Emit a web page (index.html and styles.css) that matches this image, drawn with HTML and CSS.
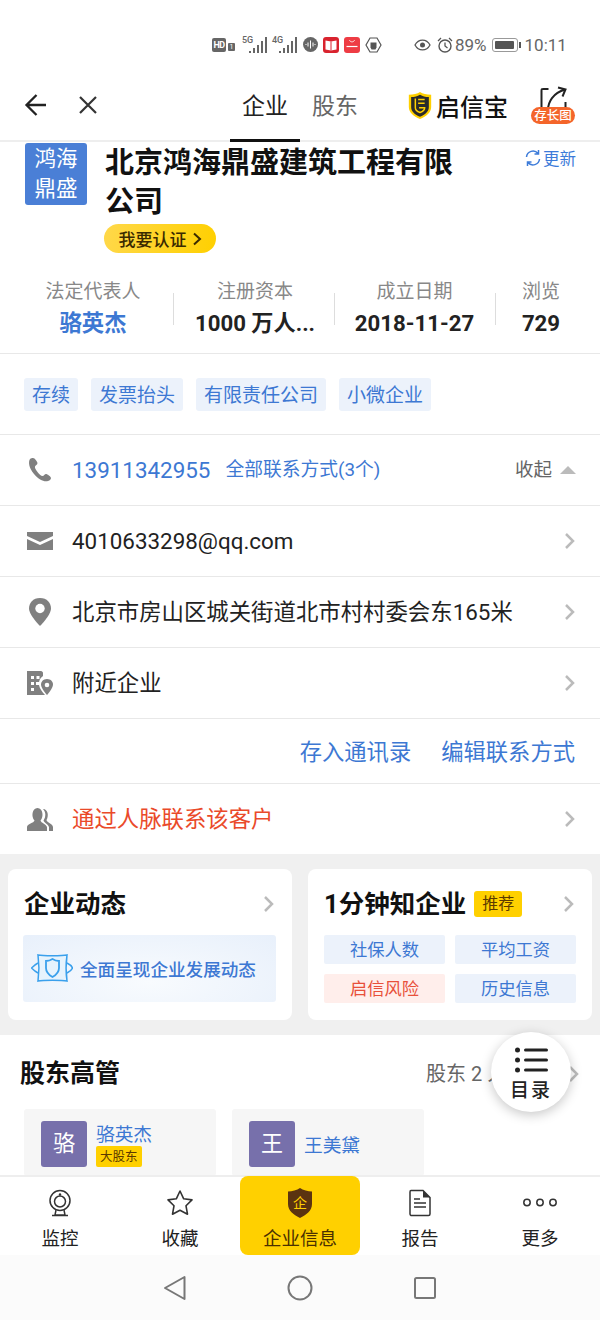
FILE: index.html
```html
<!DOCTYPE html>
<html lang="zh">
<head>
<meta charset="utf-8">
<title>北京鸿海鼎盛建筑工程有限公司</title>
<link rel="stylesheet" href="styles.css">
</head>
<body>
<div class="page">
  <div class="status">
    <span class="hd">HD</span><span class="sim">1</span>
    <span class="net"><i>5G</i><svg width="18" height="16" viewBox="0 0 18 16"><path d="M1 14v2M5 11v5M9 8v8M13 4v12M17 0v16" stroke="#666" stroke-width="2"/></svg></span>
    <span class="net"><i>4G</i><svg width="18" height="16" viewBox="0 0 18 16"><path d="M1 14v2M5 11v5M9 8v8M13 4v12M17 0v16" stroke="#666" stroke-width="2"/></svg></span>
    <svg class="s-ic sound" width="15" height="15" viewBox="0 0 15 15"><circle cx="7.500" cy="7.500" r="7.500" fill="#666"/><path d="M2.500 7.500h1M5 5.500v4M7.500 3.500v8M10 5.500v4M12 7v1" stroke="#fff" stroke-width="1"/></svg>
    <svg class="s-ic" width="16" height="16" viewBox="0 0 16 16"><rect width="16" height="16" rx="3" fill="#d9232e"/><path d="M2.500 3.500l5.500 1 5.500-1v9l-5.500 1-5.500-1z" fill="#fff"/><path d="M8 4.500v9" stroke="#d9232e"/></svg>
    <svg class="s-ic" width="16" height="16" viewBox="0 0 16 16"><rect width="16" height="16" rx="3" fill="#ee3c44"/><path d="M5.500 3c.5 2.500 4.500 2.500 5 0" stroke="#fff" fill="none" stroke-width=".8"/><path d="M2.500 9.500h11" stroke="#fff" stroke-width="1.200"/></svg>
    <svg class="s-ic" width="17" height="16" viewBox="0 0 17 16"><path d="M5 1h7l4 7-4 7H5L1 8z" fill="none" stroke="#555" stroke-width="1.200"/><path d="M5.500 5.500h6v5l-1 2h-4l-1-2z" fill="#555"/></svg>
    <span class="s-gap"></span>
    <svg class="s-ic eye" width="17" height="12" viewBox="0 0 17 12"><path d="M1 6c3.500-6.500 11.500-6.500 15 0-3.500 6.500-11.500 6.500-15 0z" fill="none" stroke="#555" stroke-width="1.300"/><circle cx="8.500" cy="6" r="2.500" fill="#555"/></svg>
    <svg class="s-ic alarm" width="16" height="16" viewBox="0 0 16 16"><circle cx="8" cy="9" r="6" fill="none" stroke="#555" stroke-width="1.400"/><path d="M8 5.500V9l2.500 2M1 4l3-3M15 4l-3-3" fill="none" stroke="#555" stroke-width="1.300"/></svg>
    <span class="pct">89%</span>
    <span class="batt"><b></b></span>
    <span class="time">10:11</span>
  </div>

  <div class="nav">
    <svg class="nav-ic" width="24" height="24" viewBox="0 0 24 24"><path d="M22 12H3M12.500 2l-10 10 10 10" fill="none" stroke="#222" stroke-width="2.300"/></svg>
    <svg class="nav-ic close" width="20" height="20" viewBox="0 0 20 20"><path d="M2 2l16 16M18 2L2 18" fill="none" stroke="#333" stroke-width="2.200"/></svg>
    <div class="tabs">
      <span class="tab active">企业</span>
      <span class="tab">股东</span>
    </div>
    <div class="brand">
      <svg width="24" height="27" viewBox="0 0 24 29"><path d="M12 0c3 2 7 3 12 3v13c0 6-5 10-12 13C5 26 0 22 0 16V3c5 0 9-1 12-3z" fill="#ffd000"/><path d="M12 3c3 1.500 5.500 2.500 9.500 2.500V16c0 5-4 8-9.500 10.500C6.500 24 2.500 21 2.500 16V5.500C6.500 5.500 9 4.500 12 3z" fill="#2a2a2a"/><path d="M7 7v10c0 2 2 4 5 5 3-1 5-3 5-5h-6M10 8h7M10 12h7" fill="none" stroke="#ffd000" stroke-width="1.600"/></svg>
      <span>启信宝</span>
    </div>
    <div class="longshot">
      <svg width="30" height="26" viewBox="0 0 30 26"><path d="M3.500 22V5c0-2 0-2 2-2h5M27.500 16v6M10 24c0-8 5-17 17-20.500M20 1.500l7.500 2-3 7" fill="none" stroke="#222" stroke-width="2"/></svg>
      <span class="ls-badge">存长图</span>
    </div>
  </div>

  <div class="head">
    <div class="logo">鸿海<br>鼎盛</div>
    <div class="head-main">
      <h1>北京鸿海鼎盛建筑工程有限公司</h1>
      <span class="cert">我要认证<svg width="10" height="14" viewBox="0 0 10 14"><path d="M2 1.500l6 5.500-6 5.500" fill="none" stroke="#3a2a00" stroke-width="2"/></svg></span>
    </div>
    <div class="update">
      <svg width="18" height="18" viewBox="0 0 18 18"><path d="M2.500 8a6.500 6.500 0 0 1 11.500-3.500M15.500 10A6.500 6.500 0 0 1 4 13.500M14.500 1v4h-4M3.500 17v-4h4" fill="none" stroke="#3d7bd9" stroke-width="1.500"/></svg>更新
    </div>
  </div>

  <div class="stats">
    <div class="stat s1"><span class="k">法定代表人</span><span class="v link">骆英杰</span></div>
    <div class="stat s2"><span class="k">注册资本</span><span class="v">1000 万人...</span></div>
    <div class="stat s3"><span class="k">成立日期</span><span class="v">2018-11-27</span></div>
    <div class="stat s4"><span class="k">浏览</span><span class="v">729</span></div>
  </div>

  <div class="tags">
    <span class="tag">存续</span><span class="tag">发票抬头</span><span class="tag">有限责任公司</span><span class="tag">小微企业</span>
  </div>

  <div class="row">
    <svg class="r-ic" width="28" height="28" viewBox="0 0 28 28"><path d="M4 3c-2 3-1 9 4 15s10 8 14 7c2-.5 3-2 3-3 0-1.500-4-4-5-4-1.500 0-2 2-3.500 2-1.500 0-3.500-2-5-4s-3-4-2.500-5.500c.3-1.300 2.500-1.500 2.500-3.500C11 5.500 9 2 7 2 6 2 5 2 4 3z" fill="#808080"/></svg>
    <span class="phone">13911342955</span>
    <span class="allc">全部联系方式(3个)</span>
    <span class="fold">收起<i></i></span>
  </div>
  <div class="row">
    <svg class="r-ic" width="28" height="20" viewBox="0 0 28 20"><path d="M1 1h26v4L14 11 1 5zM1 8l13 6 13-6v11H1z" fill="#808080"/></svg>
    <span class="rt">4010633298@qq.com</span>
    <svg class="chev" width="12" height="18" viewBox="0 0 12 18"><path d="M2 2l7 7-7 7" fill="none" stroke="#bbb" stroke-width="2.500"/></svg>
  </div>
  <div class="row">
    <svg class="r-ic" width="28" height="30" viewBox="0 0 28 30"><path d="M14 1C7 1 3 6 3 11.500 3 18 14 29 14 29s11-11 11-17.500C25 6 21 1 14 1z" fill="#808080"/><circle cx="14" cy="11.500" r="4.700" fill="#fff"/></svg>
    <span class="rt">北京市房山区城关街道北市村村委会东165米</span>
    <svg class="chev" width="12" height="18" viewBox="0 0 12 18"><path d="M2 2l7 7-7 7" fill="none" stroke="#bbb" stroke-width="2.500"/></svg>
  </div>
  <div class="row">
    <svg class="r-ic" width="28" height="26" viewBox="0 0 28 26"><path d="M1 1h14c1 0 2 1 2 2v3c-3 2-4.500 5-4 9 .5 3 3 7 6 10H1z" fill="#808080"/><path d="M5 6h3v3H5zM10.500 6h3v3h-3zM5 12h3v3H5zM10 12h3v3h-3zM5 18h3v3H5z" fill="#fff"/><path d="M21 9c-4 0-6 3-6 5.500 0 4 6 10.500 6 10.500s6-6.500 6-10.500C27 12 25 9 21 9z" fill="#808080"/><circle cx="21" cy="15" r="2.300" fill="#fff"/></svg>
    <span class="rt">附近企业</span>
    <svg class="chev" width="12" height="18" viewBox="0 0 12 18"><path d="M2 2l7 7-7 7" fill="none" stroke="#bbb" stroke-width="2.500"/></svg>
  </div>
  <div class="actions"><span>存入通讯录</span><span>编辑联系方式</span></div>
  <div class="row last">
    <svg class="r-ic" width="28" height="26" viewBox="0 0 28 26"><path d="M1 25v-4c0-3 7-4 7.500-6.500C5 11 6 2 11.500 2S18 11 14.500 14.500C15 17 20 18 21 21v4z" fill="#808080"/><path d="M17 3c5 0 6 7 3.500 11 .5 2.500 6 3.500 6.500 7v4h-4v-4c-1-3-5-4.500-5.500-6.500C20 11 20 6 17 3z" fill="#808080"/></svg>
    <span class="rt red">通过人脉联系该客户</span>
    <svg class="chev" width="12" height="18" viewBox="0 0 12 18"><path d="M2 2l7 7-7 7" fill="none" stroke="#bbb" stroke-width="2.500"/></svg>
  </div>

  <div class="cards">
    <div class="card">
      <div class="c-head"><b>企业动态</b>
        <svg class="chev" width="12" height="18" viewBox="0 0 12 18"><path d="M2 2l7 7-7 7" fill="none" stroke="#bbb" stroke-width="2.500"/></svg></div>
      <div class="banner">
        <svg width="42" height="28" viewBox="0 0 42 28"><path d="M7 1c5 1 24 1 29 0-1 7-1 19 0 26-5-1-24-1-29 0 1-7 1-19 0-26z" fill="#e6f3fd" stroke="#3aa0ec" stroke-width="1.500"/><path d="M7 9c-3 1.500-5 3.500-6.500 5C2 15.500 4 17.500 7 19M36 9c3 1.500 5 3.500 5.500 5-.5 1.500-2.500 3.500-5.500 5" fill="none" stroke="#3aa0ec" stroke-width="1.500"/><path d="M21.500 5c2 1.300 4.500 2 6.500 2v7c0 4-3 7-6.500 9-3.500-2-6.500-5-6.500-9V7c2 0 4.500-.7 6.500-2z" fill="none" stroke="#3aa0ec" stroke-width="1.800"/></svg>
        <span>全面呈现企业发展动态</span>
      </div>
    </div>
    <div class="card">
      <div class="c-head"><b>1分钟知企业</b><span class="rec">推荐</span>
        <svg class="chev" width="12" height="18" viewBox="0 0 12 18"><path d="M2 2l7 7-7 7" fill="none" stroke="#bbb" stroke-width="2.500"/></svg></div>
      <div class="chips">
        <span class="chip">社保人数</span><span class="chip">平均工资</span>
        <span class="chip risk">启信风险</span><span class="chip">历史信息</span>
      </div>
    </div>
  </div>

  <div class="holders">
    <div class="h-head"><b>股东高管</b><span class="h-more">股东 2 人</span>
      <svg class="chev" width="12" height="18" viewBox="0 0 12 18"><path d="M2 2l7 7-7 7" fill="none" stroke="#bbb" stroke-width="2.500"/></svg></div>
    <div class="h-list">
      <div class="h-card"><span class="av">骆</span><div class="h-info"><span class="h-name">骆英杰</span><span class="h-tag">大股东</span></div></div>
      <div class="h-card"><span class="av">王</span><div class="h-info"><span class="h-name">王美黛</span></div></div>
    </div>
    <div class="toc">
      <svg width="33" height="26" viewBox="0 0 33 26"><circle cx="2.500" cy="3" r="2.500" fill="#222"/><circle cx="2.500" cy="13" r="2.500" fill="#222"/><circle cx="2.500" cy="23" r="2.500" fill="#222"/><path d="M10.500 3h21M10.500 13h21M10.500 23h21" stroke="#222" stroke-width="3" stroke-linecap="round"/></svg>
      <span>目录</span>
    </div>
  </div>

  <div class="tabbar">
    <div class="tb">
      <svg width="28" height="28" viewBox="0 0 28 28"><circle cx="14" cy="11.500" r="10" fill="none" stroke="#333" stroke-width="1.500"/><circle cx="14" cy="12.500" r="5.500" fill="none" stroke="#333" stroke-width="1.500"/><circle cx="14" cy="5.500" r="1.200" fill="#333"/><path d="M10 21l-1 5h10l-1-5M6 26.500h16" fill="none" stroke="#333" stroke-width="1.500"/></svg>
      <span>监控</span>
    </div>
    <div class="tb">
      <svg width="28" height="28" viewBox="0 0 28 28"><path d="M14 2l3.700 7.800 8.300 1.100-6 5.900 1.500 8.400L14 21.200l-7.500 4 1.500-8.400-6-5.900 8.300-1.100z" fill="none" stroke="#333" stroke-width="1.600" stroke-linejoin="round"/></svg>
      <span>收藏</span>
    </div>
    <div class="tb on">
      <svg width="28" height="32" viewBox="0 0 28 32"><path d="M14 1c3 2 8 3.500 12 3.500V17c0 7-6 11-12 14C8 28 2 24 2 17V4.500C6 4.500 11 3 14 1z" fill="#5b3310"/><text x="14" y="21" text-anchor="middle" class="shield-t">企</text></svg>
      <span>企业信息</span>
    </div>
    <div class="tb">
      <svg width="28" height="28" viewBox="0 0 28 28"><path d="M5 1.500h12l7 7V25c0 1-.5 1.500-1.500 1.500h-17.500C5 26.500 4 26 4 25V3c0-1 .5-1.500 1-1.500z" fill="none" stroke="#333" stroke-width="1.500"/><path d="M17 1.500v7h7z" fill="#333"/><path d="M8 10h6M8 14h12M8 18h12" stroke="#333" stroke-width="1.400"/></svg>
      <span>报告</span>
    </div>
    <div class="tb">
      <svg width="36" height="28" viewBox="0 0 36 28"><circle cx="5" cy="13.500" r="3.200" fill="none" stroke="#333" stroke-width="1.500"/><circle cx="18" cy="13.500" r="3.200" fill="none" stroke="#333" stroke-width="1.500"/><circle cx="31" cy="13.500" r="3.200" fill="none" stroke="#333" stroke-width="1.500"/></svg>
      <span>更多</span>
    </div>
  </div>

  <div class="sysbar">
    <svg width="24" height="26" viewBox="0 0 24 26"><path d="M21.500 2v22L2 13z" fill="none" stroke="#777" stroke-width="2" stroke-linejoin="round"/></svg>
    <svg width="26" height="26" viewBox="0 0 26 26"><circle cx="13" cy="13" r="11.500" fill="none" stroke="#777" stroke-width="2"/></svg>
    <svg width="24" height="24" viewBox="0 0 24 24"><rect x="2" y="2" width="20" height="20" rx="1.500" fill="none" stroke="#777" stroke-width="2"/></svg>
  </div>
</div>
</body>
</html>
```
FILE: styles.css
```css
* { box-sizing: border-box; }
html, body { margin: 0; padding: 0; background: #fff; }
body { font-family: Roboto, "Noto Sans CJK SC", sans-serif; color: #222; }
.page { width: 600px; height: 1320px; overflow: hidden; display: flex; flex-direction: column; position: relative; }

.status { height: 71px; flex: none; display: flex; align-items: center; padding: 18px 0 0 212px; color: #555; gap: 5px; background: #fff; }
.hd { background: #666; color: #fff; font-size: 9px; font-weight: 700; width: 14px; height: 14px; border-radius: 2px; display: flex; align-items: center; justify-content: center; margin-right: -3px; letter-spacing: -.5px; flex: none; }
.sim { font-size: 7px; background: #666; color: #fff; width: 7px; height: 8px; display: flex; align-items: center; justify-content: center; margin-top: 5px; margin-right: 2px; border-radius: 1px; flex: none; }
.net { position: relative; width: 25px; height: 16px; display: block; flex: none; }
.net i { position: absolute; left: 0; top: -2px; font-style: normal; font-size: 9px; color: #666; font-weight: 500; }
.net svg { position: absolute; right: 0; top: 0; }
.sound { margin-left: 1px; }
.s-gap { width: 22px; flex: none; }
.s-ic { flex: none; }
.eye { margin-right: 1px; }
.alarm { margin-right: -3px; }
.pct { font-size: 17px; color: #666; }
.batt { width: 26px; height: 14px; border: 1px solid #999; border-radius: 3px; padding: 2px; position: relative; flex: none; }
.batt b { display: block; width: 19px; height: 100%; background: #555; border-radius: 1px; }
.batt::after { content: ""; position: absolute; right: -4px; top: 3px; width: 2px; height: 6px; background: #555; }
.time { font-size: 17px; color: #666; margin-left: 2px; }

.nav { height: 71px; flex: none; display: flex; align-items: center; padding: 0 25px 0 24px; border-bottom: 2px solid #eee; position: relative; }
.nav-ic { flex: none; margin-top: -1px; }
.close { margin-left: 30px; }
.tabs { display: flex; margin-left: 132px; height: 69px; }
.tab { font-size: 23px; width: 70px; text-align: center; line-height: 71px; color: #666; }
.tab.active { color: #222; border-bottom: 3px solid #111; margin-bottom: -2px; height: 71px; }
.brand { display: flex; align-items: center; gap: 4px; margin-left: 38px; font-size: 24px; font-weight: 500; color: #111; }
.longshot { position: relative; margin-left: auto; width: 44px; height: 50px; display: flex; justify-content: center; padding-top: 5px; }
.ls-badge { position: absolute; left: 0; top: 26px; width: 44px; height: 17px; border-radius: 9px; background: #f4652a; color: #fff; font-size: 12.500px; font-weight: 500; line-height: 17px; text-align: center; white-space: nowrap; }

.head { height: 129px; flex: none; display: flex; padding: 1px 24px 0 25px; position: relative; }
.logo { width: 62px; height: 62px; flex: none; background: #4a7fd6; color: #fff; font-size: 21.500px; line-height: 30px; text-align: center; border-radius: 3px; padding-top: 1px; }
.head-main { margin-left: 18px; width: 360px; display: flex; flex-direction: column; align-items: flex-start; padding-top: 1px; }
h1 { margin: 0; font-size: 29px; line-height: 39px; font-weight: 700; color: #111; }
.cert { margin-top: 2px; height: 29px; width: 112px; margin-left: -1px; border-radius: 15px; background: linear-gradient(100deg, #ffd84a, #ffd000); color: #3a2a00; font-size: 17px; display: flex; align-items: center; justify-content: center; gap: 5px; font-weight: 500; }
.update { position: absolute; right: 24px; top: 4px; display: flex; align-items: center; gap: 1px; font-size: 16.500px; color: #3d7bd9; }

.stats { height: 83px; flex: none; display: flex; align-items: flex-start; border-bottom: 1px solid #e8e8e8; padding-top: 8px; }
.stat { display: flex; flex-direction: column; align-items: center; position: relative; flex: none; }
.stat + .stat::before { content: ""; position: absolute; left: 0; top: 14px; width: 1px; height: 32px; background: #ddd; }
.s1 { width: 173px; padding-left: 13px; }
.s2 { width: 161px; padding-left: 3px; }
.s3 { width: 161px; }
.s4 { width: 105px; padding-right: 13px; }
.k { font-size: 19px; color: #888; line-height: 26px; white-space: nowrap; }
.v { font-size: 22.200px; font-weight: 700; color: #222; line-height: 36px; white-space: nowrap; }
.v.link { color: #3d78d3; font-size: 22.400px; }

.tags { height: 81px; flex: none; display: flex; align-items: center; gap: 13px; padding: 0 24px; border-bottom: 1px solid #e8e8e8; }
.tag { height: 33px; line-height: 35px; padding: 0 8px; background: #ecf2fb; color: #3d78d3; font-size: 19px; border-radius: 3px; }

.row { height: 71px; flex: none; display: flex; align-items: center; padding: 0 24px 0 26px; border-bottom: 1px solid #e8e8e8; }
.row.last { height: 70px; border-bottom: 0; }
.r-ic { flex: none; margin-right: 18px; }
.phone { font-size: 22.400px; line-height: 30px; color: #3d78d3; }
.allc { font-size: 18.800px; line-height: 32px; color: #3d78d3; margin-left: 15px; }
.fold { margin-left: auto; font-size: 18.500px; line-height: 32px; color: #666; display: flex; align-items: center; gap: 8px; }
.fold i { width: 0; height: 0; border-left: 8px solid transparent; border-right: 8px solid transparent; border-bottom: 8px solid #bbb; }
.rt { font-size: 22.400px; line-height: 30px; color: #222; flex: 1; }
.rt.red { color: #ea4a2a; }
.chev { flex: none; }

.actions { height: 65px; flex: none; display: flex; align-items: center; justify-content: flex-end; gap: 30px; padding: 0 25px 3px 24px; border-bottom: 1px solid #e8e8e8; color: #3d78d3; font-size: 22.300px; }
.row.last .rt { line-height: 28px; }

.cards { height: 181px; flex: none; background: #f0f0f0; display: flex; gap: 16px; padding: 15px 8px 15px; }
.card { flex: 1; background: #fff; border-radius: 8px; padding: 0 16px; }
.c-head { height: 66px; display: flex; align-items: center; font-size: 25.500px; line-height: 34px; color: #111; padding-top: 3px; }
.c-head b { font-weight: 700; }
.c-head .chev { margin-left: auto; margin-right: 1px; }
.rec { margin-left: 8px; background: #ffd000; color: #5b3a00; font-size: 16px; height: 26px; line-height: 26px; padding: 0 8px; border-radius: 3px; }
.banner { height: 67px; display: flex; align-items: center; gap: 7px; margin-left: -1px; padding: 0 0 1px 8px; border-radius: 3px; background: radial-gradient(ellipse at 50% 70%, #f8fbfe, #e8f0fb); }
.banner span { font-size: 17.600px; font-weight: 500; color: #3d78d3; }
.chips { display: grid; grid-template-columns: 121px 121px; column-gap: 10px; row-gap: 10px; }
.chip { height: 29px; line-height: 31px; background: #ecf2fb; color: #3d78d3; font-size: 17.300px; text-align: center; border-radius: 2px; }
.chip.risk { background: #ffeeeb; color: #e8503a; }

.holders { height: 140px; flex: none; background: #fff; position: relative; overflow: visible; }
.h-head { height: 74px; display: flex; align-items: center; padding: 4px 20px 0 20px; }
.h-head b { font-size: 25px; line-height: 34px; color: #111; }
.h-more { margin-left: auto; width: 142px; font-size: 20px; line-height: 28px; color: #666; white-space: nowrap; }
.h-list { display: flex; gap: 16px; padding-left: 24px; }
.h-card { width: 192px; height: 67px; background: #f6f6f6; border-radius: 3px; display: flex; padding: 12px 0 0 17px; gap: 9px; }
.av { width: 46px; height: 46px; background: #7770ab; color: #fff; font-size: 22px; line-height: 46px; text-align: center; border-radius: 3px; flex: none; }
.h-info { display: flex; flex-direction: column; justify-content: center; height: 46px; align-items: flex-start; }
.h-name { color: #3d78d3; font-size: 18.700px; line-height: 24px; }
.h-name:only-child { margin-top: 3px; }
.h-tag { background: #ffd000; color: #5b3a00; font-size: 12.500px; line-height: 21px; height: 21px; padding: 0 4px; border-radius: 2px; margin-top: -1px; margin-bottom: -1px; }
.toc { position: absolute; left: 491px; top: -3px; width: 80px; height: 80px; border-radius: 50%; background: #fff; box-shadow: 0 3px 12px rgba(0,0,0,.22); display: flex; flex-direction: column; align-items: center; padding-top: 15px; font-size: 19px; color: #222; font-weight: 500; letter-spacing: 2px; line-height: 26px; }
.toc svg { display: block; flex: none; }
.toc span { margin-top: 5px; }

.tabbar { height: 80px; flex: none; display: grid; grid-template-columns: repeat(5, 120px); background: #fff; border-top: 2px solid #eee; position: relative; }
.tb { display: flex; flex-direction: column; align-items: center; font-size: 18.500px; color: #222; padding-top: 10px; height: 78px; }
.tb svg { height: 32px; flex: none; }
.tb span { margin-top: 7px; line-height: 26px; }
.tb.on { background: #ffd000; border-radius: 8px; color: #4a3000; margin-top: -1px; height: 79px; padding-top: 11px; }
.shield-t { fill: #ffd000; font-size: 14px; font-family: "Noto Sans CJK SC", sans-serif; }

.sysbar { flex: 1; background: #fbfbfb; display: flex; align-items: center; padding-left: 163px; gap: 100px; }
```
